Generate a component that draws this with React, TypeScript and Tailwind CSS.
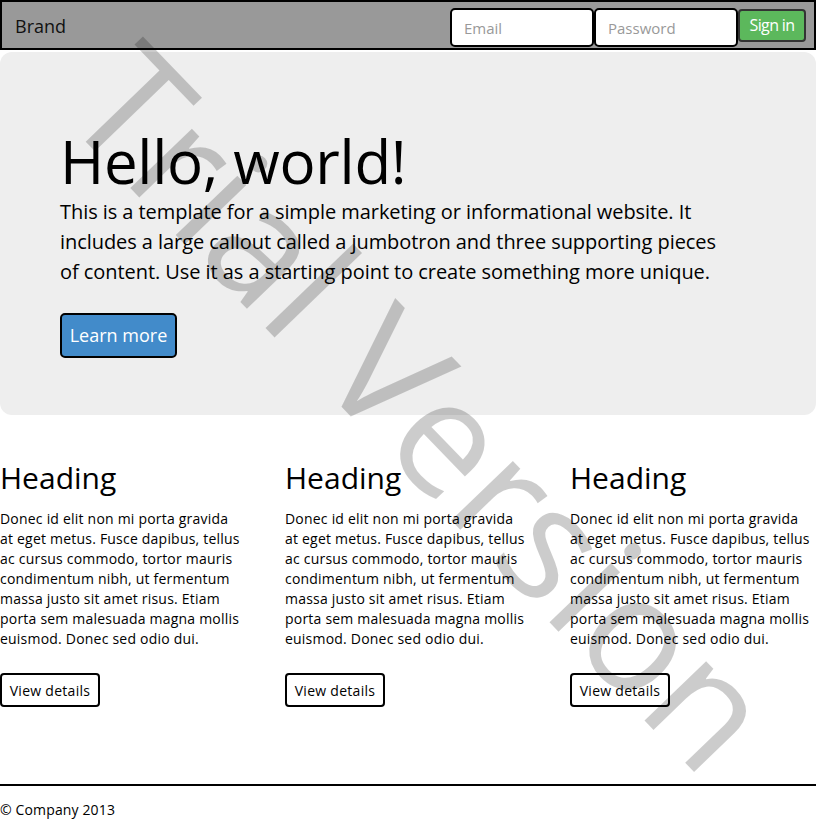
const jumboLines = [
  "This is a template for a simple marketing or informational website. It",
  "includes a large callout called a jumbotron and three supporting pieces",
  "of content. Use it as a starting point to create something more unique.",
];

const colLines = [
  "Donec id elit non mi porta gravida",
  "at eget metus. Fusce dapibus, tellus",
  "ac cursus commodo, tortor mauris",
  "condimentum nibh, ut fermentum",
  "massa justo sit amet risus. Etiam",
  "porta sem malesuada magna mollis",
  "euismod. Donec sed odio dui.",
];

function Column() {
  return (
    <div className="w-[285px] shrink-0">
      <h2 className="text-[30px] leading-[33px]">Heading</h2>
      <p className="mt-[15px] whitespace-nowrap text-[14px] leading-[20px] tracking-[0.015em]">
        {colLines.map((l) => (
          <span key={l} className="block">
            {l}
          </span>
        ))}
      </p>
      <button className="mt-[24px] flex h-[34px] w-[100px] items-center justify-center rounded-[4px] border-2 border-black bg-white text-[14px] tracking-[0.02em]">
        View details
      </button>
    </div>
  );
}

export default function App() {
  return (
    <div className="relative h-[824px] w-[816px] overflow-hidden bg-white font-['Open_Sans',sans-serif] text-black">
      {/* navbar */}
      <nav className="flex h-[50px] items-start justify-between border-2 border-black bg-[#999] pl-[13px] pr-[8px]">
        <span className="mt-[12px] text-[18px] leading-[24px] text-[#111]">Brand</span>
        <form className="flex items-start">
          <input
            placeholder="Email"
            className="mt-[6px] h-[39px] w-[144px] rounded-[5px] border-2 border-black bg-white px-[12px] text-[15px] placeholder:text-[#999]"
          />
          <input
            placeholder="Password"
            type="password"
            className="mt-[6px] h-[39px] w-[144px] rounded-[5px] border-2 border-black bg-white px-[12px] text-[15px] placeholder:text-[#999]"
          />
          <button
            type="button"
            className="mt-[7px] flex h-[33px] w-[68px] items-center justify-center rounded-[4px] border-2 border-[#333] bg-[#5cb85c] pb-[2px] text-[16px] tracking-[-0.04em] text-white"
          >
            Sign in
          </button>
        </form>
      </nav>

      {/* jumbotron */}
      <section className="mt-[2px] h-[363px] rounded-[12px] bg-[#eee] pl-[60px] pt-[75px]">
        <h1 className="text-[60px] leading-[68px] tracking-[-0.005em]">Hello, world!</h1>
        <p className="mt-[2px] whitespace-nowrap text-[20px] leading-[30px] tracking-[-0.003em]">
          {jumboLines.map((l) => (
            <span key={l} className="block">
              {l}
            </span>
          ))}
        </p>
        <button className="mt-[26px] flex h-[45px] w-[117px] items-center justify-center rounded-[5px] border-2 border-black bg-[#428bca] text-[18px] text-white">
          Learn more
        </button>
      </section>

      {/* columns */}
      <div className="mt-[46px] flex">
        <Column />
        <Column />
        <Column />
      </div>

      <hr className="mt-[77px] border-t-2 border-black" />
      <footer className="mt-[14px] text-[14px] leading-[20px] tracking-[0.01em]">© Company 2013</footer>

      {/* watermark */}
      <div className="pointer-events-none absolute inset-0">
        <span className="absolute left-[426px] top-[405px] -translate-x-1/2 -translate-y-1/2 rotate-[46deg] whitespace-nowrap text-[160px] leading-none text-black/20">
          Trial Version
        </span>
      </div>
    </div>
  );
}
